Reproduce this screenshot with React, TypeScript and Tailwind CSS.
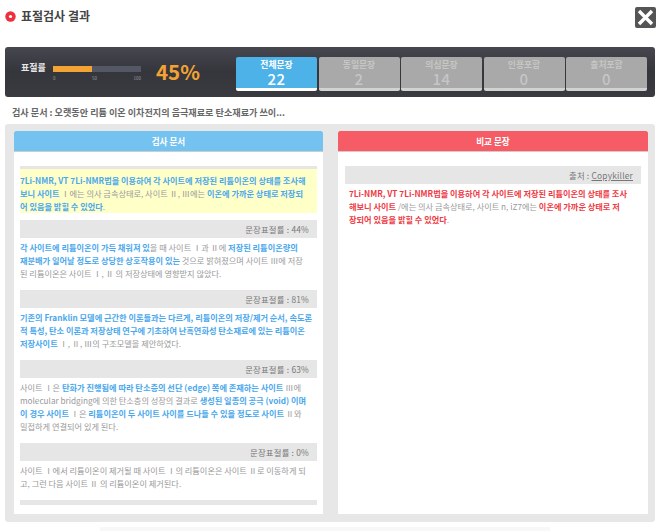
const BLUE = 'font-bold text-[#4aa8ec]'
const RED = 'font-bold text-[#ee3a44]'

function B({ children }: { children: string }) {
  return <span className={BLUE}>{children}</span>
}

function R({ children }: { children: string }) {
  return <span className={RED}>{children}</span>
}

function Rate({ value }: { value: string }) {
  return (
    <div className="h-[18px] bg-[#e6e6e6] px-2 text-right text-[8.4px] leading-[18px] tracking-[0.2px] text-[#777]">
      문장표절률 : {value}
    </div>
  )
}

function Para({ children }: { children: React.ReactNode }) {
  return <p className="mb-[10px] mt-[3px] whitespace-nowrap text-[8.2px] leading-[13px] text-[#999]">{children}</p>
}

const tabs = [
  { label: '전체문장', count: '22', active: true },
  { label: '동일문장', count: '2' },
  { label: '의심문장', count: '14' },
  { label: '인용포함', count: '0' },
  { label: '출처포함', count: '0' },
]

export default function App() {
  return (
    <div className="relative h-[531px] w-[660px] overflow-hidden bg-white font-['Noto_Sans_CJK_KR','Noto_Sans',sans-serif]">
      <div className="flex h-[47px] items-start justify-between pl-[5px] pr-[4px]">
        <div className="mt-[8px] flex items-center gap-[5px]">
          <svg width="11" height="11" viewBox="0 0 11 11">
            <circle cx="5.5" cy="5.5" r="5.2" fill="#ee2f3c" />
            <circle cx="5.5" cy="5.5" r="1.6" fill="#fff" />
          </svg>
          <span className="text-[12px] font-bold leading-[16px] text-[#444]">표절검사 결과</span>
        </div>
        <div className="mt-[7px] flex h-[21px] w-[21px] items-center justify-center rounded-[2px] bg-[#555]">
          <svg width="17" height="17" viewBox="0 0 17 17">
            <path d="M2 2 L15 15 M15 2 L2 15" stroke="#fff" strokeWidth="3.4" />
          </svg>
        </div>
      </div>

      <div className="mx-[5px] flex h-[50px] items-start rounded-[3px] bg-gradient-to-b from-[#46474f] via-[#35363c] to-[#3a3b41] pl-[16px] pt-[10px]">
        <span className="mt-[5px] w-[32px] text-[9px] font-bold leading-[12px] text-[#e8e8e8]">표절률</span>
        <div className="mt-[9px] w-[88px]">
          <div className="h-[6px] bg-[#545764]">
            <div className="h-full w-[44%] bg-[#f3a333]" />
          </div>
          <div className="mt-[3px] flex justify-between text-[4.5px] leading-[6px] text-[#999]">
            <span>0</span>
            <span>50</span>
            <span>100</span>
          </div>
        </div>
        <span className="ml-[15px] w-[80px] text-[20.5px] font-semibold leading-[28px] text-[#f3a333]">45%</span>
        <div className="flex gap-[1.5px]">
          {tabs.map((t) => (
            <div
              key={t.label}
              className={`flex h-[34px] w-[81px] flex-col items-center rounded-[2px] border-b-[3px] pt-[1px] ${
                t.active ? 'border-white bg-[#4db2e8] text-white' : 'border-[#d2d2d2] bg-[#a9a9a9] text-[#c6c6c6]'
              }`}
            >
              <span className="text-[8.8px] font-bold leading-[13px]">{t.label}</span>
              <span className="text-[15px] font-medium leading-[16px] tracking-[0.5px]">{t.count}</span>
            </div>
          ))}
        </div>
      </div>

      <div className="h-[27px] pl-[12px] pt-[8px] text-[9.1px] font-bold leading-[14px] text-[#666]">
        검사 문서 : 오랫동안 리튬 이온 이차전지의 음극재료로 탄소재료가 쓰이...
      </div>

      <div className="mx-[5px] flex h-[398px] gap-[15px] rounded-[3px] bg-[#e7e7e7] pl-[9px] pt-[7px]">
        <div className="flex h-[383px] w-[309px] flex-col bg-white">
          <div className="h-[21px] rounded-t-[2px] border-b border-[#c8ced2] bg-[#74c2f0] text-center text-[8.6px] font-bold leading-[21px] text-white">
            검사 문서
          </div>
          <div className="px-[6px] pt-[14px]">
            <div className="mb-[7px] h-[47px] whitespace-nowrap border-t-[3px] border-[#e6e6e6] bg-[#ffffc8] pt-[5px] text-[8.2px] leading-[13px] text-[#999]">
              <B>7Li-NMR, VT 7Li-NMR법을 이용하여 각 사이트에 저장된 리튬이온의 상태를 조사해</B>
              <br />
              <B>보니 사이트</B> Ⅰ에는 의사 금속상태로, 사이트 Ⅱ, Ⅲ에는 <B>이온에 가까운 상태로 저장되</B>
              <br />
              <B>어 있음을 밝힐 수 있었다</B>.
            </div>
            <Rate value="44%" />
            <Para>
              <B>각 사이트에 리튬이온이 가득 채워져 있</B>을 때 사이트 Ⅰ과 Ⅱ에 <B>저장된 리튬이온량의</B>
              <br />
              <B>재분배가 일어날 정도로 상당한 상호작용이 있는</B> 것으로 밝혀졌으며 사이트 Ⅲ에 저장
              <br />
              된 리튬이온은 사이트 Ⅰ, Ⅱ 의 저장상태에 영향받지 않았다.
            </Para>
            <Rate value="81%" />
            <Para>
              <B>기존의 Franklin 모델에 근간한 이론들과는 다르게, 리튬이온의 저장/제거 순서, 속도론</B>
              <br />
              <B>적 특성, 탄소 이론과 저장상태 연구에 기초하여 난흑연화성 탄소재료에 있는 리튬이온</B>
              <br />
              <B>저장사이트</B> Ⅰ, Ⅱ, Ⅲ의 구조모델을 제안하였다.
            </Para>
            <Rate value="63%" />
            <Para>
              사이트 Ⅰ은 <B>탄화가 진행됨에 따라 탄소층의 선단 (edge) 쪽에 존재하는 사이트</B> Ⅲ에
              <br />
              molecular bridging에 의한 탄소층의 성장의 결과로 <B>생성된 일종의 공극 (void) 이며</B>
              <br />
              <B>이 경우 사이트</B> Ⅰ은 <B>리튬이온이 두 사이트 사이를 드나들 수 있을 정도로 사이트</B> Ⅱ와
              <br />
              밀접하게 연결되어 있게 된다.
            </Para>
            <Rate value="0%" />
            <Para>
              사이트 Ⅰ에서 리튬이온이 제거될 때 사이트 Ⅰ의 리튬이온은 사이트 Ⅱ로 이동하게 되
              <br />
              고, 그런 다음 사이트 Ⅱ 의 리튬이온이 제거된다.
            </Para>
            <div className="h-[5px] bg-[#e6e6e6]" />
          </div>
        </div>

        <div className="flex h-[383px] w-[310px] flex-col bg-white">
          <div className="h-[21px] rounded-t-[2px] border-b border-[#d8c8c8] bg-[#f55c66] text-center text-[8.6px] font-bold leading-[21px] text-white">
            비교 문장
          </div>
          <div className="px-[7px] pt-[14px]">
            <div className="h-[18px] bg-[#e6e6e6] px-2 text-right text-[8.4px] leading-[18px] tracking-[0.2px] text-[#777]">
              출처 : <span className="underline">Copykiller</span>
            </div>
            <p className="mt-[3px] whitespace-nowrap px-[4px] text-[8.2px] leading-[13px] text-[#999]">
              <R>7Li-NMR, VT 7Li-NMR법을 이용하여 각 사이트에 저장된 리튬이온의 상태를 조사</R>
              <br />
              <R>해보니 사이트</R> /에는 의사 금속상태로, 사이트 n, iZ7에는 <R>이온에 가까운 상태로 저</R>
              <br />
              <R>장되어 있음을 밝힐 수 있었다</R>.
            </p>
          </div>
        </div>
      </div>
      <div className="absolute bottom-0 left-[100px] h-[4px] w-[450px] bg-[#f8f8f8]" />
    </div>
  )
}
